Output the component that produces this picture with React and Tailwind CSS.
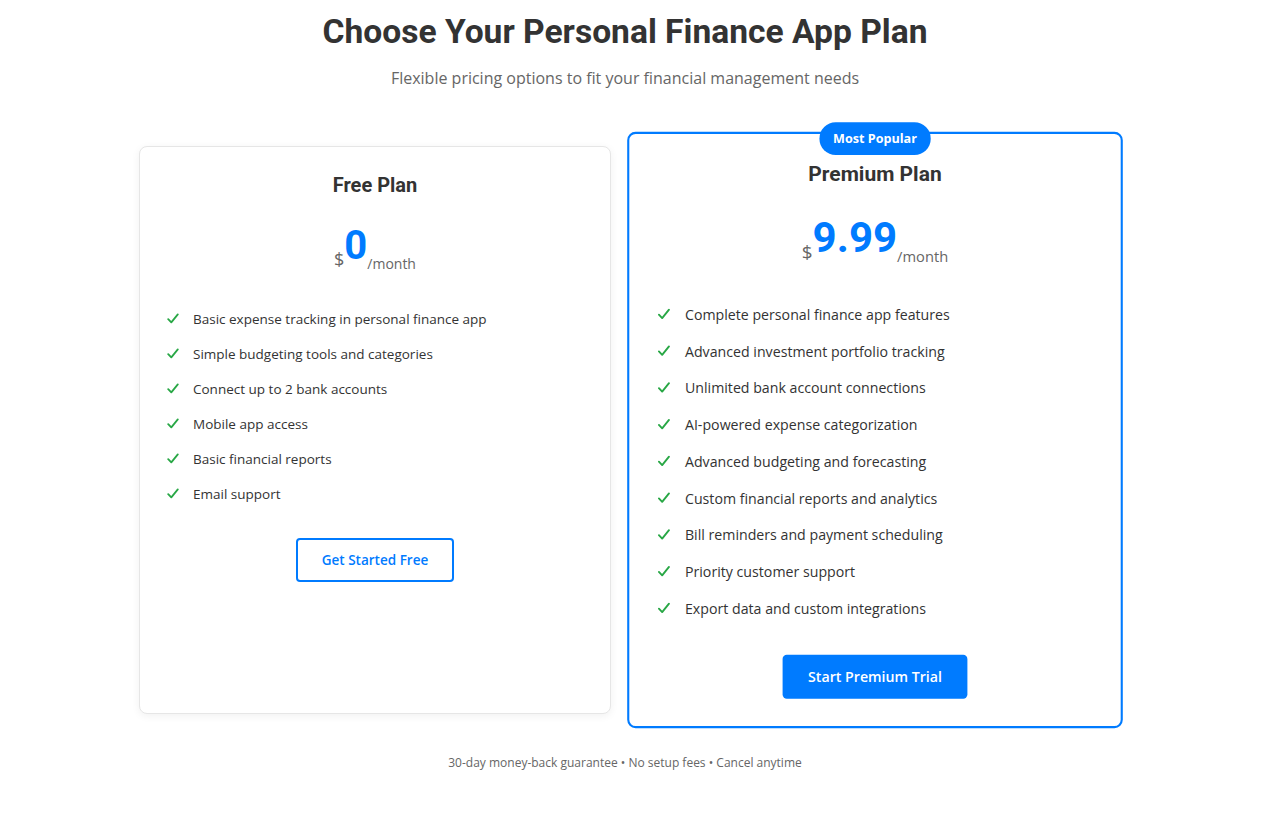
import React from "react";

const freeFeatures = [
  "Basic expense tracking in personal finance app",
  "Simple budgeting tools and categories",
  "Connect up to 2 bank accounts",
  "Mobile app access",
  "Basic financial reports",
  "Email support",
];

const premiumFeatures = [
  "Complete personal finance app features",
  "Advanced investment portfolio tracking",
  "Unlimited bank account connections",
  "AI-powered expense categorization",
  "Advanced budgeting and forecasting",
  "Custom financial reports and analytics",
  "Bill reminders and payment scheduling",
  "Priority customer support",
  "Export data and custom integrations",
];

function Check() {
  return (
    <svg width="12" height="11" viewBox="0 0 12 11" className="ml-[3px]">
      <path
        d="M1.2 6.2 L4.3 9.4 L10.8 1.4"
        fill="none"
        stroke="#28a745"
        strokeWidth="1.8"
        strokeLinecap="round"
        strokeLinejoin="round"
      />
    </svg>
  );
}

function Feature({ text }) {
  return (
    <li className="flex items-center h-[35px]">
      <span className="w-[29px] flex items-center">
        <Check />
      </span>
      <span className="text-[13.5px] leading-[20px] text-[#333]">{text}</span>
    </li>
  );
}

function Price({ amount }) {
  return (
    <div className="flex justify-center items-end h-[45px] mb-[30px]">
      <span className="text-[18px] leading-none text-[#666] mb-[3px]">$</span>
      <span
        className="text-[40px] leading-none font-bold text-[#007bff] mb-[5px]"
        style={{ fontFamily: "Roboto, sans-serif" }}
      >
        {amount}
      </span>
      <span className="text-[14px] leading-none text-[#666]">/month</span>
    </div>
  );
}

export default function App() {
  return (
    <div
      className="w-[1250px] bg-white min-h-[820px] pt-[11px]"
      style={{ fontFamily: '"Open Sans", sans-serif' }}
    >
      <h1
        className="text-center text-[33.6px] leading-[42px] font-bold text-[#333]"
        style={{ fontFamily: "Roboto, sans-serif" }}
      >
        Choose Your Personal Finance App Plan
      </h1>
      <p className="text-center text-[16px] leading-[24px] text-[#666] mt-[13px]">
        Flexible pricing options to fit your financial management needs
      </p>

      <div className="grid grid-cols-2 gap-[28px] w-[972px] mx-auto mt-[56px]">
        {/* Free plan */}
        <div className="border border-[#e6e6e6] rounded-[8px] bg-white px-6 pt-[26px] pb-[26px] shadow-[0_2px_8px_rgba(0,0,0,0.06)] flex flex-col">
          <h3
            className="text-center text-[20px] leading-[24px] font-bold text-[#333] mb-[29px]"
            style={{ fontFamily: "Roboto, sans-serif" }}
          >
            Free Plan
          </h3>
          <Price amount="0" />
          <ul className="mb-[27px]">
            {freeFeatures.map((f) => (
              <Feature key={f} text={f} />
            ))}
          </ul>
          <div className="flex justify-center">
            <button className="border-2 border-[#007bff] rounded-[4px] px-6 py-[10px] text-[13.5px] leading-5 font-semibold text-[#007bff] bg-white">
              Get Started Free
            </button>
          </div>
        </div>

        {/* Premium plan */}
        <div className="relative border-2 border-[#007bff] rounded-[8px] bg-white px-6 pt-[26px] pb-[26px] scale-[1.05] flex flex-col">
          <div className="absolute top-[-11px] left-1/2 -translate-x-1/2 bg-[#007bff] text-white text-[12px] leading-[19px] font-bold rounded-full px-[13px] py-[6px] whitespace-nowrap">
            Most Popular
          </div>
          <h3
            className="text-center text-[20px] leading-[24px] font-bold text-[#333] mb-[29px]"
            style={{ fontFamily: "Roboto, sans-serif" }}
          >
            Premium Plan
          </h3>
          <Price amount="9.99" />
          <ul className="mb-[27px]">
            {premiumFeatures.map((f) => (
              <Feature key={f} text={f} />
            ))}
          </ul>
          <div className="flex justify-center">
            <button className="rounded-[4px] px-6 py-[11px] text-[13.5px] leading-5 font-semibold text-white bg-[#007bff]">
              Start Premium Trial
            </button>
          </div>
        </div>
      </div>

      <p className="text-center text-[12px] leading-[18px] text-[#666] mt-[40px]">
        30-day money-back guarantee • No setup fees • Cancel anytime
      </p>
    </div>
  );
}
